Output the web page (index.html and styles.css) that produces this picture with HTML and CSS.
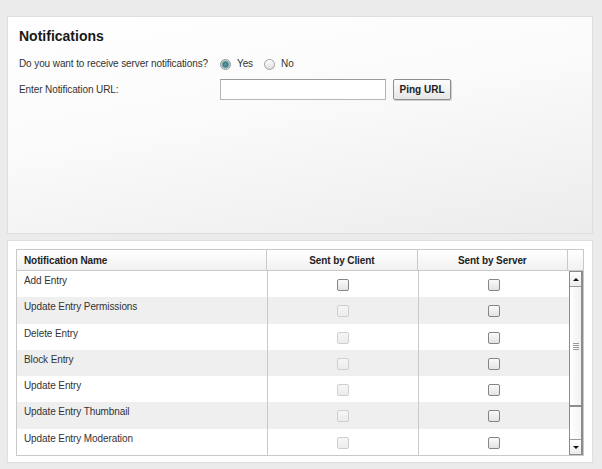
FILE: index.html
```html
<!DOCTYPE html>
<html>
<head>
<meta charset="utf-8">
<link rel="stylesheet" href="styles.css">
</head>
<body>
<div class="panel settings">
  <h1 class="title">Notifications</h1>
  <div class="form-row">
    <div class="label">Do you want to receive server notifications?</div>
    <div class="field">
      <span class="radio checked"></span><span class="opt">Yes</span>
      <span class="radio"></span><span class="opt">No</span>
    </div>
  </div>
  <div class="form-row url-row">
    <div class="label">Enter Notification URL:</div>
    <div class="field">
      <input class="url" type="text">
      <button class="btn">Ping URL</button>
    </div>
  </div>
</div>
<div class="panel list">
  <div class="grid">
    <div class="head">
      <div class="hc name">Notification Name</div>
      <div class="hc">Sent by Client</div>
      <div class="hc">Sent by Server</div>
      <div class="hc sbh"></div>
    </div>
    <div class="body">
      <div class="rows">
        <div class="row"><div class="c name">Add Entry</div><div class="c chk"><span class="cb"></span></div><div class="c chk"><span class="cb"></span></div></div>
        <div class="row alt"><div class="c name">Update Entry Permissions</div><div class="c chk"><span class="cb dis"></span></div><div class="c chk"><span class="cb"></span></div></div>
        <div class="row"><div class="c name">Delete Entry</div><div class="c chk"><span class="cb dis"></span></div><div class="c chk"><span class="cb"></span></div></div>
        <div class="row alt"><div class="c name">Block Entry</div><div class="c chk"><span class="cb dis"></span></div><div class="c chk"><span class="cb"></span></div></div>
        <div class="row"><div class="c name">Update Entry</div><div class="c chk"><span class="cb dis"></span></div><div class="c chk"><span class="cb"></span></div></div>
        <div class="row alt"><div class="c name">Update Entry Thumbnail</div><div class="c chk"><span class="cb dis"></span></div><div class="c chk"><span class="cb"></span></div></div>
        <div class="row"><div class="c name">Update Entry Moderation</div><div class="c chk"><span class="cb dis"></span></div><div class="c chk"><span class="cb"></span></div></div>
      </div>
      <div class="scrollbar">
        <div class="sbtn"><span class="arrow up"></span></div>
        <div class="thumb"><span class="grip"></span></div>
        <div class="track"></div>
        <div class="sbtn"><span class="arrow down"></span></div>
      </div>
    </div>
  </div>
</div>
</body>
</html>
```
FILE: styles.css
```css
html, body {
  margin: 0;
  padding: 0;
}
body {
  background: #ebebeb;
  font-family: "Liberation Sans", Arial, sans-serif;
  font-size: 10px;
  letter-spacing: -0.1px;
  color: #333;
  width: 602px;
  height: 469px;
  overflow: hidden;
}
.panel {
  box-sizing: border-box;
  width: 586px;
  margin-left: 7px;
  border: 1px solid #dcdfde;
}
.settings {
  margin-top: 16px;
  height: 218px;
  background: linear-gradient(170deg, #ffffff 0%, #fafafa 45%, #ececec 100%);
  padding: 10px 11px;
}
.title {
  margin: 0 0 10px 0;
  font-size: 14px;
  font-weight: bold;
  color: #1a1a1a;
  line-height: 18px;
  letter-spacing: 0;
}
.form-row {
  display: flex;
  align-items: center;
  height: 16px;
}
.url-row {
  margin-top: 6px;
  height: 24px;
}
.label {
  width: 201px;
}
.field {
  display: flex;
  align-items: center;
}
.radio {
  box-sizing: border-box;
  width: 11px;
  height: 11px;
  border-radius: 50%;
  border: 1px solid #a0a0a0;
  background: linear-gradient(#ffffff, #dddddd);
  margin-right: 6px;
  margin-top: 2px;
}
.radio.checked {
  background: radial-gradient(circle at 50% 50%, #5b9a9f 0, #3f7c84 2.5px, #b9c9cb 4px, #e8e8e8 5px);
  border-color: #8a9a9c;
}
.opt {
  margin-right: 11px;
  font-size: 10px;
}
.url {
  box-sizing: border-box;
  width: 166px;
  height: 21px;
  border: 1px solid #b5b5b5;
  border-top-color: #999;
  background: #fff;
  margin: 0;
  padding: 0 3px;
}
.btn {
  box-sizing: border-box;
  margin: 0 0 0 7px;
  width: 58px;
  height: 21px;
  border: 1px solid #8e8e8e;
  border-radius: 2px;
  background: linear-gradient(#fdfdfd, #e6e6e6);
  font-family: "Liberation Sans", Arial, sans-serif;
  font-size: 10px;
  font-weight: bold;
  color: #222;
  padding: 0;
  box-shadow: 1px 1px 0 #cfcfcf;
}
.list {
  margin-top: 6px;
  height: 223px;
  background: #fff;
  padding: 8px 9px 0 8px;
}
.grid {
  box-sizing: border-box;
  width: 568px;
  height: 207px;
  border: 1px solid #c9c9c9;
  display: flex;
  flex-direction: column;
}
.head {
  display: flex;
  height: 20px;
  border-bottom: 1px solid #c9c9c9;
  background: linear-gradient(#ffffff, #f1f1f1);
  flex: none;
}
.hc {
  box-sizing: border-box;
  width: 151px;
  font-weight: bold;
  color: #222;
  text-align: center;
  line-height: 21px;
  border-right: 1px solid #c9c9c9;
}
.hc.name {
  width: 251px;
  text-align: left;
  padding-left: 7px;
}
.hc.sbh {
  width: 15px;
  border-right: none;
}
.body {
  flex: 1;
  display: flex;
  min-height: 0;
}
.rows {
  flex: 1;
  display: grid;
  grid-template-rows: repeat(7, 1fr);
}
.row {
  display: flex;
}
.row.alt {
  background: #efefef;
}
.c {
  box-sizing: border-box;
  width: 151px;
  border-right: 1px solid #c9c9c9;
}
.c.name {
  width: 251px;
  padding: 4px 0 0 7px;
  color: #333;
}
.c.chk {
  display: flex;
  justify-content: center;
  padding-top: 8px;
}
.c.chk:last-child {
  width: 150px;
  border-right: none;
}
.cb {
  box-sizing: border-box;
  width: 12px;
  height: 12px;
  border: 1px solid #858585;
  border-radius: 2px;
  background: linear-gradient(#fafafa, #e3e3e3);
}
.cb.dis {
  border-color: #cfcfcf;
  background: linear-gradient(#f6f6f6, #ececec);
}
.scrollbar {
  box-sizing: border-box;
  width: 16px;
  border: 1px solid #8c8c8c;
  border-right-width: 2px;
  display: flex;
  flex-direction: column;
  background: #fff;
}
.sbtn {
  height: 14px;
  display: flex;
  align-items: center;
  justify-content: center;
  background: linear-gradient(#ffffff, #ececec);
  flex: none;
}
.sbtn:first-child {
  border-bottom: 1px solid #9a9a9a;
}
.sbtn:last-child {
  border-top: 1px solid #9a9a9a;
}
.arrow {
  width: 0;
  height: 0;
  border-left: 3px solid transparent;
  border-right: 3px solid transparent;
}
.arrow.up {
  border-bottom: 3px solid #111;
}
.arrow.down {
  border-top: 3px solid #111;
}
.thumb {
  height: 118px;
  flex: none;
  border-bottom: 2px solid #8c8c8c;
  background: linear-gradient(90deg, #ffffff, #f0f0f0);
  display: flex;
  align-items: center;
  justify-content: center;
}
.grip {
  width: 6px;
  height: 7px;
  background: repeating-linear-gradient(#999 0, #999 1px, transparent 1px, transparent 2px);
}
.track {
  flex: 1;
  background: linear-gradient(90deg, #ffffff, #f4f4f4);
}
```
